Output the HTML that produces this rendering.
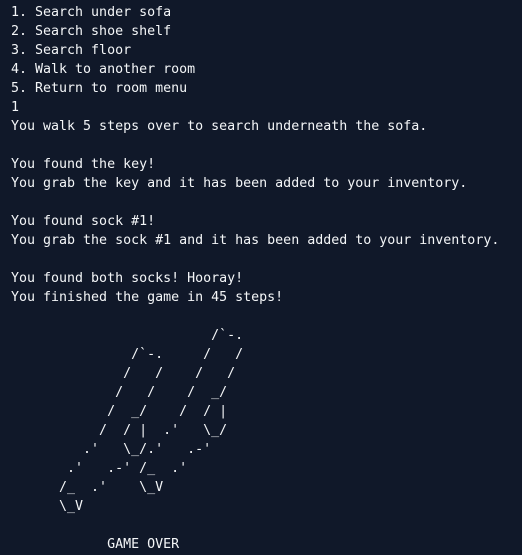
<!DOCTYPE html>
<html><head><style>
html,body{margin:0;padding:0;background:#101829;width:522px;height:555px;overflow:hidden}
pre{margin:0;padding:3px 0 0 11px;color:#f4f6f8;font-family:"DejaVu Sans Mono","Liberation Mono",monospace;font-size:13.3px;line-height:19px}
</style></head><body><pre>1. Search under sofa
2. Search shoe shelf
3. Search floor
4. Walk to another room
5. Return to room menu
1
You walk 5 steps over to search underneath the sofa.

You found the key!
You grab the key and it has been added to your inventory.

You found sock #1!
You grab the sock #1 and it has been added to your inventory.

You found both socks! Hooray!
You finished the game in 45 steps!

                         /`-.
               /`-.     /   /
              /   /    /   /
             /   /    /  _/
            /  _/    /  / |
           /  / |  .'   \_/
         .'   \_/.'   .-'
       .'   .-' /_  .'
      /_  .'    \_V
      \_V

            GAME OVER</pre></body></html>
